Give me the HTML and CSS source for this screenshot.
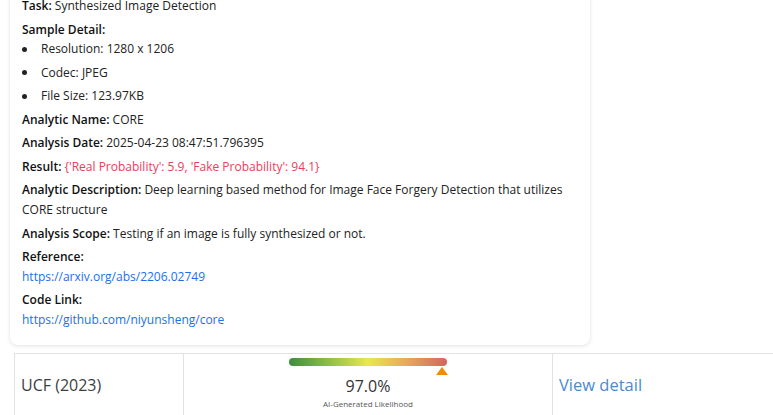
FILE: index.html
```html
<!DOCTYPE html>
<html lang="en">
<head>
    <meta charset="UTF-8">
    <title>Analysis Result</title>
    <link rel="stylesheet" href="styles.css">
</head>
<body>
    <div class="page">
        <div class="detail-card">
            <p><strong>Task:</strong> Synthesized Image Detection</p>
            <p class="label-only"><strong>Sample Detail:</strong></p>
            <ul class="sample-list">
                <li>Resolution: 1280 x 1206</li>
                <li>Codec: JPEG</li>
                <li>File Size: 123.97KB</li>
            </ul>
            <p><strong>Analytic Name:</strong> CORE</p>
            <p><strong>Analysis Date:</strong> 2025-04-23 08:47:51.796395</p>
            <p><strong>Result:</strong> <span class="result">{'Real Probability': 5.9, 'Fake Probability': 94.1}</span></p>
            <p><strong>Analytic Description:</strong> Deep learning based method for Image Face Forgery Detection that utilizes CORE structure</p>
            <p><strong>Analysis Scope:</strong> Testing if an image is fully synthesized or not.</p>
            <p><strong>Reference:</strong><br><a href="#">https://arxiv.org/abs/2206.02749</a></p>
            <p><strong>Code Link:</strong><br><a href="#">https://github.com/niyunsheng/core</a></p>
        </div>

        <table class="results">
            <tr>
                <td class="col-name">UCF (2023)</td>
                <td class="col-score">
                    <div class="meter">
                        <div class="meter-bar"></div>
                        <div class="meter-pointer" style="left: 97%"></div>
                    </div>
                    <div class="score">97.0%</div>
                    <div class="score-label">AI-Generated Likelihood</div>
                </td>
                <td class="col-link"><a href="#">View detail</a></td>
            </tr>
        </table>
    </div>
</body>
</html>
```

FILE: styles.css
```css
body {
    margin: 0;
    background: #fff;
    overflow: hidden;
}

.page {
    margin-top: -16px;
}

/* Detail card */
.detail-card {
    width: 556px;
    margin-left: 10px;
    padding: 12px 12px 11px 12px;
    background: #fff;
    border-radius: 8px;
    box-shadow: 0 1px 4px rgba(0, 0, 0, 0.12);
    font-family: "Open Sans", "Noto Sans", sans-serif;
    font-size: 12px;
    line-height: 19.75px;
    color: #222;
}

.detail-card p {
    margin: 0 0 3.75px 0;
}

.detail-card strong {
    font-weight: 600;
    color: #111;
}

.detail-card .label-only {
    margin-bottom: 0;
}

.sample-list {
    list-style: none;
    margin: 0 0 3.75px 0;
    padding: 0;
}

.sample-list li {
    display: flex;
    align-items: center;
    margin-bottom: 3.75px;
}

.sample-list li::before {
    content: "";
    width: 5px;
    height: 5px;
    border-radius: 50%;
    background: #222;
    margin: 0 14px 0 0;
}

.result {
    color: #e8405a;
}

.detail-card a {
    color: #1a6ff0;
    text-decoration: none;
}

/* Result row */
.results {
    margin: 8px 0 0 14px;
    width: 820px;
    border-collapse: collapse;
    font-family: "Open Sans", sans-serif;
}

.results td {
    border: 1px solid #e2e2e2;
    height: 62px;
    padding: 0 6px;
    vertical-align: middle;
}

.col-name {
    width: 156px;
    font-size: 16px;
    color: #3b3f44;
}

.col-score {
    width: 356px;
    text-align: center;
    vertical-align: top !important;
}

.meter {
    position: relative;
    width: 158px;
    margin: 4px auto 0 auto;
    height: 16px;
}

.meter-bar {
    height: 8px;
    border-radius: 4px;
    background: linear-gradient(to right, #3e8e3e, #8dbf45 25%, #e9e84c 50%, #e3a95a 75%, #d5645e);
}

.meter-pointer {
    position: absolute;
    top: 9px;
    margin-left: -6px;
    width: 0;
    height: 0;
    border-left: 6px solid transparent;
    border-right: 6px solid transparent;
    border-bottom: 8px solid #f28c00;
}

.score {
    font-size: 16px;
    line-height: 18px;
    color: #333;
    margin-top: 3px;
}

.score-label {
    font-size: 8px;
    color: #555;
    margin-top: 3px;
}

.col-link {
    font-size: 16.5px;
}

.col-link a {
    color: #4a8ad0;
    text-decoration: none;
}
```
